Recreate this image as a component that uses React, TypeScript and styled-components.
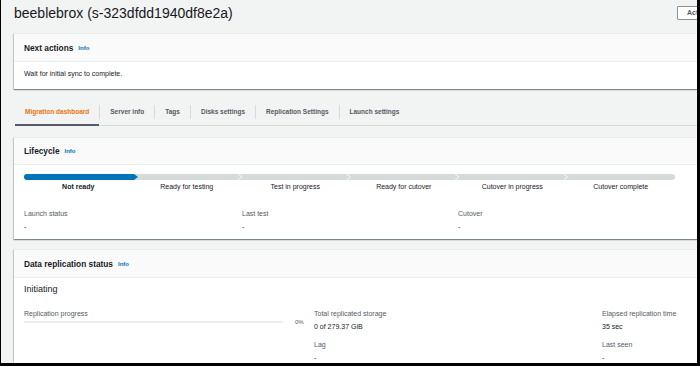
import React from 'react';
import styled, { createGlobalStyle } from 'styled-components';

const GlobalStyle = createGlobalStyle`
  html, body {
    margin: 0;
    padding: 0;
    background: #f2f3f3;
  }
  body {
    font-family: "Liberation Sans", Arial, sans-serif;
    color: #16191f;
  }
`;

const Frame = styled.div`
  width: 700px;
  height: 366px;
  box-sizing: border-box;
  border-left: 1px solid #000;
  border-right: 3px solid #000;
  border-bottom: 3px solid #000;
  background: #f2f3f3;
  overflow: hidden;
`;

const Page = styled.div`
  width: 720px;
  padding-left: 13px;
`;

const HeaderRow = styled.div`
  display: flex;
  align-items: center;
  padding: 5px 0 12px;
`;

const Title = styled.h1`
  margin: 0;
  font-size: 14px;
  line-height: 16px;
  font-weight: 400;
  color: #16191f;
  flex: 1;
`;

const ActionButton = styled.button`
  width: 57px;
  height: 14px;
  box-sizing: border-box;
  padding: 0 0 0 9px;
  text-align: left;
  font-family: inherit;
  font-size: 7px;
  font-weight: 700;
  color: #545b64;
  background: #fff;
  border: 1px solid #8a9496;
  border-radius: 1px;
`;

const Card = styled.section<{ $gap?: number }>`
  background: #fff;
  border-top: 1px solid #eaeded;
  box-shadow: 0 1px 1px 0 rgba(0, 28, 36, 0.3), 1px 1px 1px 0 rgba(0, 28, 36, 0.15),
    -1px 1px 1px 0 rgba(0, 28, 36, 0.15);
  margin-top: ${(p) => p.$gap ?? 0}px;
`;

const CardHeader = styled.div<{ $h: number }>`
  height: ${(p) => p.$h}px;
  box-sizing: border-box;
  display: flex;
  align-items: center;
  gap: 5px;
  padding: 0 10px;
  background: #fafafa;
  border-bottom: 1px solid #eaeded;
`;

const CardTitle = styled.h2`
  margin: 0;
  font-size: 8.3px;
  line-height: 10px;
  font-weight: 700;
  color: #16191f;
`;

const InfoLink = styled.span`
  font-size: 6px;
  font-weight: 700;
  color: #0073bb;
`;

const CardBody = styled.div`
  padding: 8px 10px 11px;
  font-size: 7px;
  line-height: 8px;
  color: #16191f;
`;

const TabList = styled.nav`
  display: flex;
  align-items: center;
  margin: 10px 0 0 1px;
  border-bottom: 1px solid #d5dbdb;
`;

const Tab = styled.div<{ $active?: boolean }>`
  height: 27px;
  box-sizing: border-box;
  margin-bottom: -1px;
  padding: 0 10px;
  display: flex;
  align-items: center;
  font-size: 6.5px;
  font-weight: 700;
  color: ${(p) => (p.$active ? '#ec7211' : '#545b64')};
  border-bottom: 2px solid ${(p) => (p.$active ? '#545b64' : 'transparent')};
`;

const TabDivider = styled.span`
  width: 1px;
  height: 14px;
  background: #d5dbdb;
  margin-bottom: 1px;
`;

const LifecycleBody = styled.div`
  padding: 9px 10px 8px;
`;

const Steps = styled.div`
  display: grid;
  grid-template-columns: repeat(6, 108.5px);
  margin-top: 3px;
`;

const Step = styled.div<{ $current?: boolean }>`
  text-align: center;
  font-size: 7px;
  line-height: 8px;
  font-weight: ${(p) => (p.$current ? 700 : 400)};
  color: #16191f;
`;

const Columns = styled.div<{ $cols: string; $top: number }>`
  display: grid;
  grid-template-columns: ${(p) => p.$cols};
  margin-top: ${(p) => p.$top}px;
`;

const Stack = styled.div`
  display: flex;
  flex-direction: column;
  gap: 10px;
`;

const Field = styled.div`
  display: flex;
  flex-direction: column;
  gap: 5px;
`;

const Label = styled.div`
  font-size: 7px;
  line-height: 8px;
  color: #545b64;
`;

const Value = styled.div`
  font-size: 7px;
  line-height: 8px;
  color: #16191f;
`;

const ReplicationBody = styled.div`
  padding: 6px 10px 10px;
`;

const Status = styled.div`
  font-size: 9px;
  line-height: 11px;
  color: #16191f;
`;

const ProgressRow = styled.div`
  display: flex;
  align-items: center;
  gap: 12px;
  margin-top: 1px;
`;

const Track = styled.div`
  width: 259px;
  height: 2px;
  background: #eaeded;
  border-radius: 1px;
`;

const Percent = styled.span`
  font-size: 6px;
  color: #545b64;
`;

const STEP = 108.5;
const steps = [
  'Not ready',
  'Ready for testing',
  'Test in progress',
  'Ready for cutover',
  'Cutover in progress',
  'Cutover complete',
];

const LifecycleBar = () => (
  <svg width={651} height={6} style={{ display: 'block' }}>
    <rect x={0} y={0} width={651} height={6} rx={3} fill="#d5dbdb" />
    <path d="M3 0 H110 L114 3 L110 6 H3 A3 3 0 0 1 3 0 Z" fill="#0073bb" />
    {[2, 3, 4, 5].map((k) => (
      <polyline
        key={k}
        points={`${k * STEP - 3},0 ${k * STEP + 1},3 ${k * STEP - 3},6`}
        fill="none"
        stroke="#fff"
        strokeWidth={0.8}
      />
    ))}
  </svg>
);

const App = () => {
  return (
    <Frame>
      <GlobalStyle />
      <Page>
        <HeaderRow>
          <Title>beeblebrox (s-323dfdd1940df8e2a)</Title>
          <ActionButton>Actions ▾</ActionButton>
        </HeaderRow>

        <Card>
          <CardHeader $h={28}>
            <CardTitle>Next actions</CardTitle>
            <InfoLink>Info</InfoLink>
          </CardHeader>
          <CardBody>Wait for initial sync to complete.</CardBody>
        </Card>

        <TabList>
          <Tab $active>Migration dashboard</Tab>
          <TabDivider />
          <Tab>Server info</Tab>
          <TabDivider />
          <Tab>Tags</Tab>
          <TabDivider />
          <Tab>Disks settings</Tab>
          <TabDivider />
          <Tab>Replication Settings</Tab>
          <TabDivider />
          <Tab>Launch settings</Tab>
        </TabList>

        <Card $gap={11}>
          <CardHeader $h={27}>
            <CardTitle>Lifecycle</CardTitle>
            <InfoLink>Info</InfoLink>
          </CardHeader>
          <LifecycleBody>
            <LifecycleBar />
            <Steps>
              {steps.map((s, i) => (
                <Step key={s} $current={i === 0}>
                  {s}
                </Step>
              ))}
            </Steps>
            <Columns $cols="218px 216px 217px" $top={19}>
              <Field>
                <Label>Launch status</Label>
                <Value>-</Value>
              </Field>
              <Field>
                <Label>Last test</Label>
                <Value>-</Value>
              </Field>
              <Field>
                <Label>Cutover</Label>
                <Value>-</Value>
              </Field>
            </Columns>
          </LifecycleBody>
        </Card>

        <Card $gap={10}>
          <CardHeader $h={28}>
            <CardTitle>Data replication status</CardTitle>
            <InfoLink>Info</InfoLink>
          </CardHeader>
          <ReplicationBody>
            <Status>Initiating</Status>
            <Columns $cols="290px 288px 1fr" $top={15}>
              <div>
                <Label>Replication progress</Label>
                <ProgressRow>
                  <Track />
                  <Percent>0%</Percent>
                </ProgressRow>
              </div>
              <Stack>
                <Field>
                  <Label>Total replicated storage</Label>
                  <Value>0 of 279.37 GiB</Value>
                </Field>
                <Field>
                  <Label>Lag</Label>
                  <Value>-</Value>
                </Field>
              </Stack>
              <Stack>
                <Field>
                  <Label>Elapsed replication time</Label>
                  <Value>35 sec</Value>
                </Field>
                <Field>
                  <Label>Last seen</Label>
                  <Value>-</Value>
                </Field>
              </Stack>
            </Columns>
          </ReplicationBody>
        </Card>
      </Page>
    </Frame>
  );
};

export default App;
